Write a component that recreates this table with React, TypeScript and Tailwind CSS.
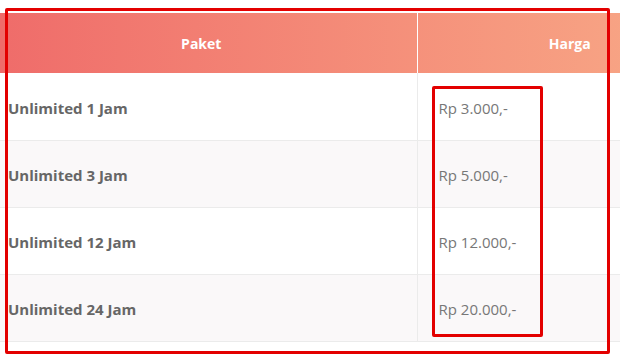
import React from 'react';

const rows = [
  { paket: 'Unlimited 1 Jam', harga: 'Rp 3.000,-' },
  { paket: 'Unlimited 3 Jam', harga: 'Rp 5.000,-' },
  { paket: 'Unlimited 12 Jam', harga: 'Rp 12.000,-' },
  { paket: 'Unlimited 24 Jam', harga: 'Rp 20.000,-' },
];

const App: React.FC = () => {
  return (
    <div className="relative w-[620px] h-[361px] overflow-hidden bg-white font-['Open_Sans',sans-serif]">
      <div className="pt-[13px]">
        <table className="w-[722px] border-collapse table-fixed">
          <thead>
            <tr className="h-[60px] bg-gradient-to-r from-[#ef6c6a] to-[#f8ab88]">
              <th className="w-[417px] pr-[14px] text-center text-[14px] font-bold text-white">Paket</th>
              <th className="w-[305px] border-l border-white text-center text-[14px] font-bold text-white">Harga</th>
            </tr>
          </thead>
          <tbody>
            {rows.map((row, i) => (
              <tr
                key={row.paket}
                className={`h-[67px] border-b border-[#ebebeb] ${i % 2 === 1 ? 'bg-[#faf8f9]' : 'bg-white'}`}
              >
                <td className="pl-[8px] pt-[3px] text-[15px] font-bold text-[#666666]">{row.paket}</td>
                <td className="border-l border-[#ebebeb] pl-[21px] pt-[3px] text-[15px] text-[#777777]">{row.harga}</td>
              </tr>
            ))}
          </tbody>
        </table>
      </div>

      {/* annotation boxes */}
      <div className="absolute left-[5px] top-[8px] w-[605px] h-[346px] border-[3px] border-[#e30000] rounded-[2px] pointer-events-none" />
      <div className="absolute left-[432px] top-[86px] w-[111px] h-[251px] border-[3px] border-[#e30000] rounded-[2px] pointer-events-none" />
    </div>
  );
};

export default App;
